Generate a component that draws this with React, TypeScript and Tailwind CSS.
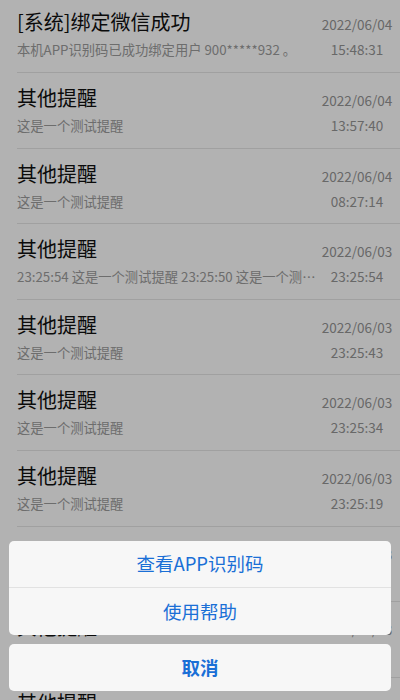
import React from "react";

type Item = { title: string; sub: string; date: string; time: string };

const items: Item[] = [
  { title: "[系统]绑定微信成功", sub: "本机APP识别码已成功绑定用户 900*****932 。", date: "2022/06/04", time: "15:48:31" },
  { title: "其他提醒", sub: "这是一个测试提醒", date: "2022/06/04", time: "13:57:40" },
  { title: "其他提醒", sub: "这是一个测试提醒", date: "2022/06/04", time: "08:27:14" },
  { title: "其他提醒", sub: "23:25:54 这是一个测试提醒 23:25:50 这是一个测试提醒", date: "2022/06/03", time: "23:25:54" },
  { title: "其他提醒", sub: "这是一个测试提醒", date: "2022/06/03", time: "23:25:43" },
  { title: "其他提醒", sub: "这是一个测试提醒", date: "2022/06/03", time: "23:25:34" },
  { title: "其他提醒", sub: "这是一个测试提醒", date: "2022/06/03", time: "23:25:19" },
  { title: "其他提醒", sub: "这是一个测试提醒", date: "2022/06/03", time: "23:25:08" },
  { title: "其他提醒", sub: "这是一个测试提醒", date: "2022/06/03", time: "23:24:57" },
  { title: "其他提醒", sub: "这是一个测试提醒", date: "2022/06/03", time: "23:24:41" },
];

const font = { fontFamily: '"Noto Sans CJK SC", "Noto Sans", sans-serif' };

export default function App() {
  return (
    <div className="relative h-[700px] w-[400px] overflow-hidden bg-white" style={font}>
      <div className="-mt-[2.6px]">
        {items.map((it, i) => (
          <div
            key={i}
            className="ml-[17px] box-border flex h-[75.6px] border-b border-[#e6e6e6] pr-[7px]"
          >
            <div className="min-w-0 flex-1 pt-[11px]">
              <div className="h-[28px] truncate text-[20px] leading-[28px] text-[#111]">{it.title}</div>
              <div className="mt-[5px] h-[18px] truncate text-[13.3px] leading-[18px] text-[#9c9c9c]">{it.sub}</div>
            </div>
            <div className="flex w-[72px] shrink-0 flex-col items-center pt-[18px]">
              <div className="h-[18px] whitespace-nowrap text-[13.5px] leading-[18px] text-[#959595]">{it.date}</div>
              <div className="mt-[7px] h-[18px] whitespace-nowrap text-[13.5px] leading-[18px] text-[#959595]">{it.time}</div>
            </div>
          </div>
        ))}
      </div>

      <div className="absolute inset-0 bg-[rgba(0,0,0,0.3)]" />

      <div className="absolute bottom-[9px] left-[9px] right-[9px] flex flex-col gap-[9px]">
        <div className="overflow-hidden rounded-[5px] bg-[#f7f7f7]">
          <button className="flex h-[46px] w-full items-center justify-center text-[18.5px] text-[#1a6fd6]">
            查看APP识别码
          </button>
          <div className="h-px bg-[#e2e2e2]" />
          <button className="flex h-[47px] w-full items-center justify-center text-[18.5px] text-[#1a6fd6]">
            使用帮助
          </button>
        </div>
        <button className="flex h-[47px] w-full items-center justify-center rounded-[5px] bg-[#f7f7f7] text-[18.5px] font-bold text-[#1a6fd6]">
          取消
        </button>
      </div>
    </div>
  );
}
